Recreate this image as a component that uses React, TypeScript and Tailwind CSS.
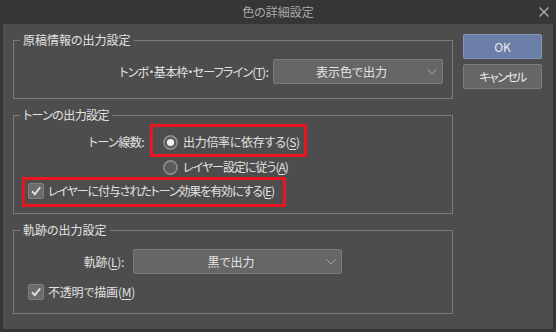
import React from "react";

const FONT = "font-['Noto_Sans_CJK_JP','Noto_Sans',sans-serif] [font-feature-settings:'palt']";

function Legend({ children, cls = "" }: { children: React.ReactNode; cls?: string }) {
  return (
    <span className={`absolute left-[6px] top-[-9px] px-[3px] bg-[#4d4d4d] text-[12px] leading-[16px] text-[#e2e2e2] ${cls}`}>
      {children}
    </span>
  );
}

function U({ c }: { c: string }) {
  return <span className="underline underline-offset-[2px] decoration-[1px]">{c}</span>;
}

function Chevron() {
  return (
    <svg width="10" height="6" viewBox="0 0 10 6" className="shrink-0">
      <polyline points="0.5,0.5 5,5 9.5,0.5" fill="none" stroke="#a6a6a6" strokeWidth="1" />
    </svg>
  );
}

function Select({ w, label }: { w: string; label: string }) {
  return (
    <div className={`${w} h-[25px] bg-[#666666] border border-[#7a7a7a] rounded-[2px] flex items-center pl-[6px] pr-[5px]`}>
      <span className="flex-1 text-center text-[12px] text-[#e6e6e6] pr-[4px]">{label}</span>
      <Chevron />
    </div>
  );
}

function Radio({ on }: { on: boolean }) {
  return (
    <svg width="15" height="15" viewBox="0 0 15 15" className="shrink-0">
      <circle cx="7.5" cy="7.5" r="6.6" fill="#5a5a5a" stroke="#8c8c8c" strokeWidth="1.6" />
      {on && <circle cx="7.5" cy="7.5" r="3.6" fill="#f2f2f2" />}
    </svg>
  );
}

function Check() {
  return (
    <div className="w-[16px] h-[16px] shrink-0 rounded-[2px] bg-[#6b6b6b] border border-[#808080] flex items-center justify-center">
      <svg width="12" height="12" viewBox="0 0 12 12">
        <polyline points="2,6.2 4.8,9.2 10.2,2.3" fill="none" stroke="#dcdcdc" strokeWidth="2" />
      </svg>
    </div>
  );
}

export default function App() {
  return (
    <div className={`w-[556px] h-[332px] bg-[#363636] flex flex-col ${FONT}`}>
      <div className="h-[24px] relative flex items-center justify-center text-[12px] text-[#a8a8a8]">
        色の詳細設定
        <svg width="10" height="10" viewBox="0 0 10 10" className="absolute right-[7px] top-[7px]">
          <line x1="0.5" y1="0.5" x2="9.5" y2="9.5" stroke="#b4b4b4" strokeWidth="1.3" />
          <line x1="9.5" y1="0.5" x2="0.5" y2="9.5" stroke="#b4b4b4" strokeWidth="1.3" />
        </svg>
      </div>
      <div className="mx-[3px] h-[305px] bg-[#4d4d4d] flex items-start pl-[10px] text-[12px] text-[#e2e2e2]">
        <div className="w-[440px] mt-[16px] flex flex-col">
          {/* group 1 */}
          <div className="relative h-[59px] border border-[#7b7b7b] flex justify-end items-start pt-[18px] pr-[9px]">
            <Legend>原稿情報の出力設定</Legend>
            <div className="h-[25px] flex items-center mr-[5px]">
              <span className="tracking-[-0.75px]">トンボ・基本枠・セーフライン(<U c="T" />):</span>
            </div>
            <Select w="w-[170px]" label="表示色で出力" />
          </div>
          {/* group 2 */}
          <div className="relative mt-[16px] h-[99px] border border-[#7b7b7b] flex flex-col pt-[16px]">
            <Legend cls="tracking-[-0.6px]">トーンの出力設定</Legend>
            <div className="h-[20px] flex items-center">
              <div className="w-[130px] text-right tracking-[-0.5px]">トーン線数:</div>
              <div className="ml-[19px]"><Radio on /></div>
              <span className="ml-[5px] tracking-[-0.3px]">出力倍率に依存する(<U c="S" />)</span>
            </div>
            <div className="h-[20px] mt-[5px] flex items-center pl-[149px]">
              <Radio on={false} />
              <span className="ml-[5px] tracking-[-1px]">レイヤー設定に従う(<U c="A" />)</span>
            </div>
            <div className="h-[20px] mt-[4px] flex items-center pl-[14px]">
              <Check />
              <span className="ml-[4px] tracking-[-1.1px]">レイヤーに付与されたトーン効果を有効にする(<U c="E" />)</span>
            </div>
            <div className="absolute left-[136px] top-[8px] w-[157px] h-[33px] border-[3px] border-[#e8161f]" />
            <div className="absolute left-[8px] top-[61px] w-[264px] h-[30px] border-[3px] border-[#e8161f]" />
          </div>
          {/* group 3 */}
          <div className="relative mt-[16px] h-[84px] border border-[#7b7b7b] flex flex-col pt-[18px]">
            <Legend>軌跡の出力設定</Legend>
            <div className="h-[25px] flex items-center">
              <div className="w-[110px] text-right tracking-[-0.3px]">軌跡(<U c="L" />):</div>
              <div className="ml-[9px]"><Select w="w-[209px]" label="黒で出力" /></div>
            </div>
            <div className="h-[20px] mt-[8px] flex items-center pl-[14px]">
              <Check />
              <span className="ml-[4px] tracking-[-0.2px]">不透明で描画(<U c="M" />)</span>
            </div>
          </div>
        </div>
        <div className="ml-[10px] mt-[10px] flex flex-col gap-[5px]">
          <button className="w-[79px] h-[25px] bg-[#6a7ea7] border border-[#8196bf] rounded-[2px] text-[12px] text-[#ececec]">OK</button>
          <button className="w-[79px] h-[25px] bg-[#666666] border border-[#7c7c7c] rounded-[2px] text-[12px] text-[#e6e6e6] tracking-[-1.5px]">キャンセル</button>
        </div>
      </div>
    </div>
  );
}
